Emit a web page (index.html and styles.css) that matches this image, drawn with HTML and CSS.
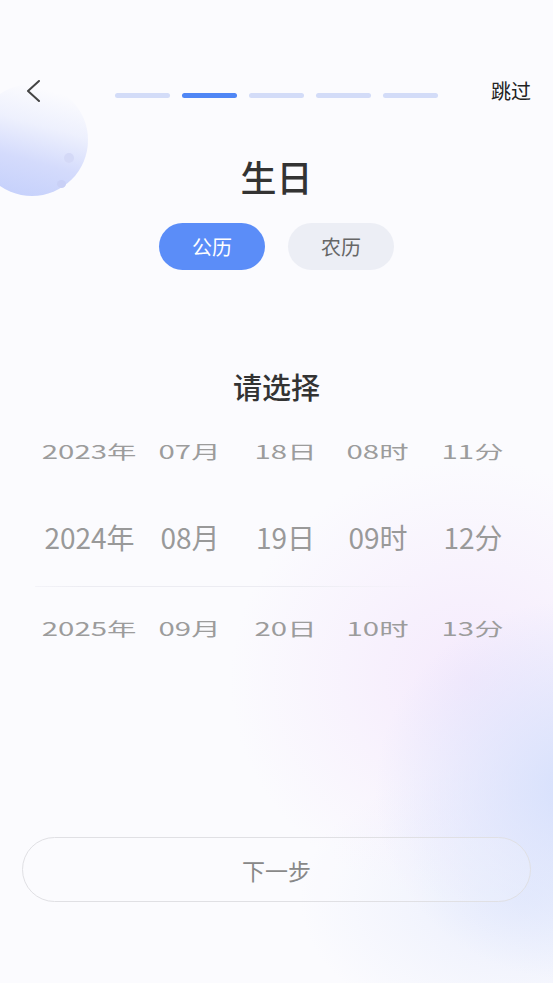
FILE: index.html
```html
<!DOCTYPE html>
<html lang="zh">
<head>
<meta charset="utf-8">
<link rel="stylesheet" href="styles.css">
</head>
<body>
<div class="page">
  <div class="deco-circle">
    <span class="dot dot-a"></span>
    <span class="dot dot-b"></span>
  </div>
  <header class="topbar">
    <div class="back">
      <svg width="16" height="22" viewBox="0 0 16 22"><path d="M13 1 L2 11 L13 21" fill="none" stroke="#444" stroke-width="2" stroke-linecap="round" stroke-linejoin="round"/></svg>
    </div>
    <div class="steps">
      <span class="step"></span>
      <span class="step active"></span>
      <span class="step"></span>
      <span class="step"></span>
      <span class="step"></span>
    </div>
    <div class="skip">跳过</div>
  </header>

  <h1 class="title">生日</h1>

  <div class="toggle">
    <span class="pill pill-on">公历</span>
    <span class="pill pill-off">农历</span>
  </div>

  <h2 class="subtitle">请选择</h2>

  <div class="picker">
    <div class="row row-side">
      <span>2023年</span><span>07月</span><span>18日</span><span>08时</span><span>11分</span>
    </div>
    <div class="row row-center">
      <span>2024年</span><span>08月</span><span>19日</span><span>09时</span><span>12分</span>
    </div>
    <div class="divider"></div>
    <div class="row row-side">
      <span>2025年</span><span>09月</span><span>20日</span><span>10时</span><span>13分</span>
    </div>
  </div>

  <div class="next">下一步</div>
</div>
</body>
</html>
```

FILE: styles.css
```css
* { box-sizing: border-box; }
html, body { margin: 0; padding: 0; }
body {
  width: 553px;
  height: 983px;
  overflow: hidden;
  font-family: "Noto Sans CJK SC", "Noto Sans", sans-serif;
  color: #333;
}
.page {
  position: relative;
  width: 553px;
  height: 983px;
  overflow: hidden;
  background:
    radial-gradient(ellipse 200px 190px at 575px 790px, rgba(214,224,252,1), rgba(214,224,252,0) 100%),
    radial-gradient(ellipse 240px 220px at 470px 680px, rgba(244,232,252,0.9), rgba(244,232,252,0) 100%),
    radial-gradient(ellipse 220px 140px at 520px 900px, rgba(230,235,252,0.8), rgba(230,235,252,0) 100%),
    #fbfbfe;
  display: flex;
  flex-direction: column;
  align-items: center;
}
.deco-circle {
  position: absolute;
  left: -24px;
  top: 84px;
  width: 112px;
  height: 112px;
  border-radius: 50%;
  background: linear-gradient(15deg, #c2cefb 0%, #d4dbfc 35%, rgba(232,236,253,0.7) 62%, rgba(251,251,254,0) 88%);
}
.dot {
  position: absolute;
  border-radius: 50%;
  background: #d4d9f7;
}
.dot-a { left: 88px; top: 69px; width: 10px; height: 10px; }
.dot-b { left: 81px; top: 96px; width: 9px; height: 8px; background: #c9d0f6; }

.topbar {
  position: relative;
  width: 100%;
  margin-top: 70px;
  height: 42px;
  display: grid;
  grid-template-columns: 1fr auto 1fr;
  align-items: center;
}
.back {
  padding-left: 26px;
  display: flex;
  align-items: center;
}
.back svg { display: block; }
.steps {
  display: flex;
  gap: 12px;
  padding-top: 9px;
}
.step {
  width: 55px;
  height: 5px;
  border-radius: 3px;
  background: #d3dcf8;
}
.step.active { background: #4f86f5; }
.skip {
  justify-self: end;
  padding-right: 22px;
  font-size: 20px;
  color: #222;
  line-height: 28px;
}

.title {
  margin: 39px 0 0;
  font-size: 36px;
  font-weight: 500;
  line-height: 50px;
  color: #333;
}

.toggle {
  margin-top: 22px;
  display: flex;
  gap: 23px;
}
.pill {
  width: 106px;
  height: 47px;
  border-radius: 24px;
  display: flex;
  align-items: center;
  justify-content: center;
  font-size: 20px;
}
.pill-on { background: #5b8df8; color: #fff; }
.pill-off { background: #eceef5; color: #666; }

.subtitle {
  margin: 96px 0 0;
  font-size: 29px;
  font-weight: 500;
  line-height: 40px;
  color: #333;
}

.picker {
  margin-top: 2px;
  width: 100%;
  padding: 0 0 0 41px;
}
.row {
  display: grid;
  grid-template-columns: 97px 104px 87px 98px 92px;
  align-items: center;
  justify-items: center;
  color: #999;
  font-size: 28px;
}
.row span { white-space: nowrap; }
.row-side span {
  display: inline-block;
  transform: scale(1.05, 0.66);
  color: #9c9c9c;
}
.row-side:first-child { height: 86px; }
.row-center { height: 92px; padding-bottom: 6px; }
.row-side:last-child { height: 82px; }
.divider {
  margin-left: -6px;
  width: 483px;
  height: 1px;
  background: linear-gradient(90deg, rgba(232,232,240,0.4), #ececf2 10%, #ececf2 55%, rgba(236,236,242,0) 80%);
}

.next {
  margin-top: 168px;
  width: 509px;
  height: 65px;
  border: 1px solid #e0e0e4;
  border-radius: 33px;
  display: flex;
  align-items: center;
  justify-content: center;
  font-size: 23px;
  color: #888;
  background: rgba(255,255,255,0.15);
}
```
